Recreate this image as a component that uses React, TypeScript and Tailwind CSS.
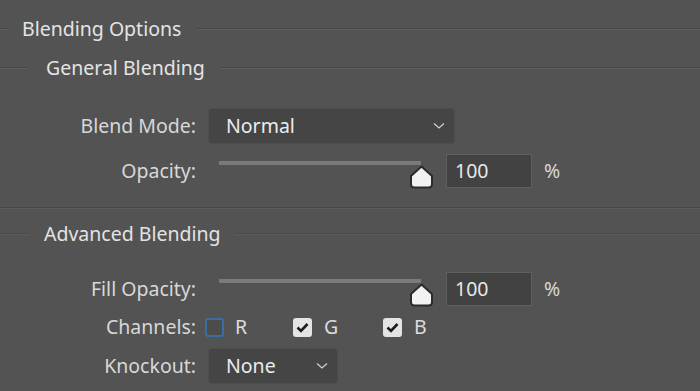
import React from "react";

const font = { fontFamily: '"Noto Sans", "Open Sans", sans-serif' };

function SectionHead({ title, indent, lead }: { title: string; indent: string; lead: string }) {
  return (
    <div className="flex items-center h-[28px]">
      <div className={`${lead} border-t border-t-[#474747] border-b border-b-[#5d5d5d]`} />
      <span className={`${indent} pr-[15px] text-[19.5px] text-[#e4e4e4] whitespace-nowrap leading-none`}>{title}</span>
      <div className="flex-1 border-t border-t-[#474747] border-b border-b-[#5d5d5d]" />
    </div>
  );
}

function Chevron({ cls }: { cls: string }) {
  return (
    <svg className={cls} width="12" height="8" viewBox="0 0 12 8" fill="none">
      <path d="M1 1.5 L6 6 L11 1.5" stroke="#cfcfcf" strokeWidth="1.3" />
    </svg>
  );
}

function Label({ children }: { children: React.ReactNode }) {
  return <div className="w-[196px] text-right text-[19.5px] text-[#d8d8d8] leading-none">{children}</div>;
}

function Slider() {
  return (
    <div className="relative w-[226px] h-[34px] ml-[11px]">
      <div className="absolute left-0 top-[7px] w-[202px] h-[4px] bg-[#7a7a7a]" />
      <svg className="absolute left-[190px] top-[11px]" width="25" height="24" viewBox="0 0 25 24">
        <path d="M12.5 1.5 L23 11 L23 19 Q23 22.5 19.5 22.5 L5.5 22.5 Q2 22.5 2 19 L2 11 Z" fill="#f2f2f2" stroke="#2b2b2b" strokeWidth="2" strokeLinejoin="round" />
      </svg>
    </div>
  );
}

function NumberBox() {
  return (
    <div className="flex items-center ml-[-11px] w-[86px] h-[34px] bg-[#424242] border border-[#5f5f5f] pl-[8px] text-[19.5px] text-[#e8e8e8]">
      100
    </div>
  );
}

function Check({ on }: { on: boolean }) {
  if (!on)
    return <div className="w-[19px] h-[19px] rounded-[3px] border-2 border-[#3c6ca6] bg-[#4c4c4c]" />;
  return (
    <div className="w-[19px] h-[19px] rounded-[3px] bg-[#e4e4e4] flex items-center justify-center">
      <svg width="13" height="11" viewBox="0 0 13 11">
        <path d="M1.5 5.5 L5 9 L11.5 2" stroke="#1c1c1c" strokeWidth="2.6" fill="none" />
      </svg>
    </div>
  );
}

export default function App() {
  return (
    <div className="w-[700px] h-[391px] overflow-hidden bg-[#535353] flex flex-col" style={font}>
      <div className="mt-[15px]">
        <SectionHead title="Blending Options" indent="pl-[14px]" lead="w-[8px]" />
      </div>
      <div className="mt-[11px]">
        <SectionHead title="General Blending" indent="pl-[18px]" lead="w-[28px]" />
      </div>

      <div className="mt-[26px] flex items-center gap-[12px]">
        <Label>Blend Mode:</Label>
        <div className="w-[247px] h-[36px] rounded-[4px] bg-[#454545] border border-[#4d4d4d] flex items-center px-[17px] justify-between">
          <span className="text-[19.5px] text-[#ececec] leading-none">Normal</span>
          <Chevron cls="mr-[-8px]" />
        </div>
      </div>

      <div className="mt-[10px] flex items-center gap-[12px]">
        <Label>Opacity:</Label>
        <Slider />
        <NumberBox />
        <span className="text-[19.5px] text-[#d8d8d8] leading-none">%</span>
      </div>

      <div className="mt-[19px] border-t border-t-[#474747] border-b border-b-[#5d5d5d]" />

      <div className="mt-[11px]">
        <SectionHead title="Advanced Blending" indent="pl-[16px]" lead="w-[28px]" />
      </div>

      <div className="mt-[24px] flex items-center gap-[12px]">
        <Label>Fill Opacity:</Label>
        <Slider />
        <NumberBox />
        <span className="text-[19.5px] text-[#d8d8d8] leading-none">%</span>
      </div>

      <div className="mt-[11px] h-[20px] flex items-center">
        <Label>Channels:</Label>
        <div className="ml-[9px] flex items-center">
          <Check on={false} />
          <span className="ml-[11px] w-[58px] text-[19.5px] text-[#dcdcdc] leading-none">R</span>
          <Check on={true} />
          <span className="ml-[12px] w-[59px] text-[19.5px] text-[#dcdcdc] leading-none">G</span>
          <Check on={true} />
          <span className="ml-[12px] text-[19.5px] text-[#dcdcdc] leading-none">B</span>
        </div>
      </div>

      <div className="mt-[11px] flex items-center gap-[12px]">
        <Label>Knockout:</Label>
        <div className="w-[130px] h-[36px] rounded-[4px] bg-[#454545] border border-[#4d4d4d] flex items-center px-[17px] justify-between">
          <span className="text-[19.5px] text-[#ececec] leading-none">None</span>
          <Chevron cls="mr-[-8px]" />
        </div>
      </div>
    </div>
  );
}
